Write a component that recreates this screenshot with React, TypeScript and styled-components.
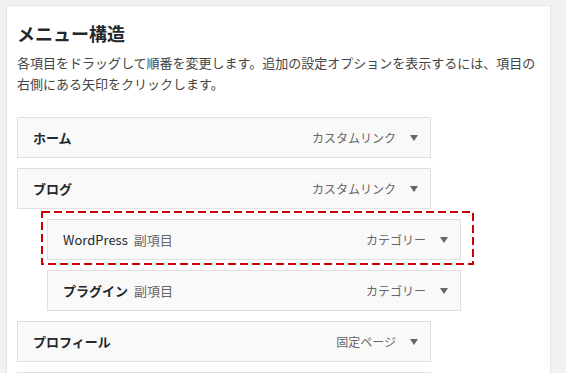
import React from "react";
import { createGlobalStyle, styled } from "styled-components";

const GlobalStyle = createGlobalStyle`
  html, body {
    margin: 0;
    padding: 0;
    background: #f1f1f1;
    overflow: hidden;
  }
  body {
    font-family: "Noto Sans CJK JP", "Noto Sans", sans-serif;
    color: #23282d;
  }
`;

const Panel = styled.div`
  box-sizing: border-box;
  margin: 5px 0 0 6px;
  width: 545px;
  min-height: 400px;
  background: #fff;
  border: 1px solid #e5e5e5;
  border-bottom: none;
  padding: 0 10px;
`;

const Title = styled.h2`
  margin: 15px 0 0;
  font-size: 18px;
  line-height: 24px;
  font-weight: 700;
  color: #23282d;
`;

const Description = styled.p`
  margin: 7px 0 0;
  font-size: 13px;
  line-height: 21px;
  color: #444;
`;

const MenuList = styled.ul`
  list-style: none;
  margin: 23px 0 0;
  padding: 0;
  display: flex;
  flex-direction: column;
  gap: 10px;
`;

const MenuItem = styled.li<{ $depth: number }>`
  position: relative;
  box-sizing: border-box;
  width: 414px;
  height: 41px;
  margin-left: ${(p) => p.$depth * 30}px;
  display: flex;
  align-items: center;
  padding: 0 12px 0 15px;
  background: #f9f9f9;
  border: 1px solid #dfdfdf;
`;

const ItemTitle = styled.span<{ $latin?: boolean }>`
  font-size: 13px;
  font-weight: ${(p) => (p.$latin ? 400 : 700)};
  color: #23282d;
`;

const SubLabel = styled.span`
  margin-left: 6px;
  font-size: 13px;
  color: #666;
`;

const ItemType = styled.span`
  margin-left: auto;
  font-size: 12px;
  color: #666;
`;

const Arrow = styled.span`
  margin-left: 14px;
  width: 0;
  height: 0;
  border-left: 4.5px solid transparent;
  border-right: 4.5px solid transparent;
  border-top: 6px solid #666;
`;

const Highlight = styled.svg`
  position: absolute;
  left: -7px;
  top: -9px;
  pointer-events: none;
  overflow: visible;
`;

type Item = {
  title: string;
  type: string;
  depth: number;
  sub?: boolean;
  latin?: boolean;
  highlight?: boolean;
};

const items: Item[] = [
  { title: "ホーム", type: "カスタムリンク", depth: 0 },
  { title: "ブログ", type: "カスタムリンク", depth: 0 },
  { title: "WordPress", type: "カテゴリー", depth: 1, sub: true, latin: true, highlight: true },
  { title: "プラグイン", type: "カテゴリー", depth: 1, sub: true },
  { title: "プロフィール", type: "固定ページ", depth: 0 },
];

const App = () => {
  return (
    <React.Fragment>
      <GlobalStyle />
      <Panel>
        <Title>メニュー構造</Title>
        <Description>
          各項目をドラッグして順番を変更します。追加の設定オプションを表示するには、項目の右側にある矢印をクリックします。
        </Description>
        <MenuList>
          {items.map((item) => (
            <MenuItem key={item.title} $depth={item.depth}>
              <ItemTitle $latin={item.latin}>{item.title}</ItemTitle>
              {item.sub && <SubLabel>副項目</SubLabel>}
              <ItemType>{item.type}</ItemType>
              <Arrow />
              {item.highlight && (
                <Highlight width="433" height="54">
                  <rect
                    x="1"
                    y="1"
                    width="431"
                    height="52"
                    fill="none"
                    stroke="#cc0000"
                    strokeWidth="2"
                    strokeDasharray="8 4"
                  />
                </Highlight>
              )}
            </MenuItem>
          ))}
          {/* next item, only its top edge shows in the frame */}
          <MenuItem $depth={0} />
        </MenuList>
      </Panel>
    </React.Fragment>
  );
};

export default App;
